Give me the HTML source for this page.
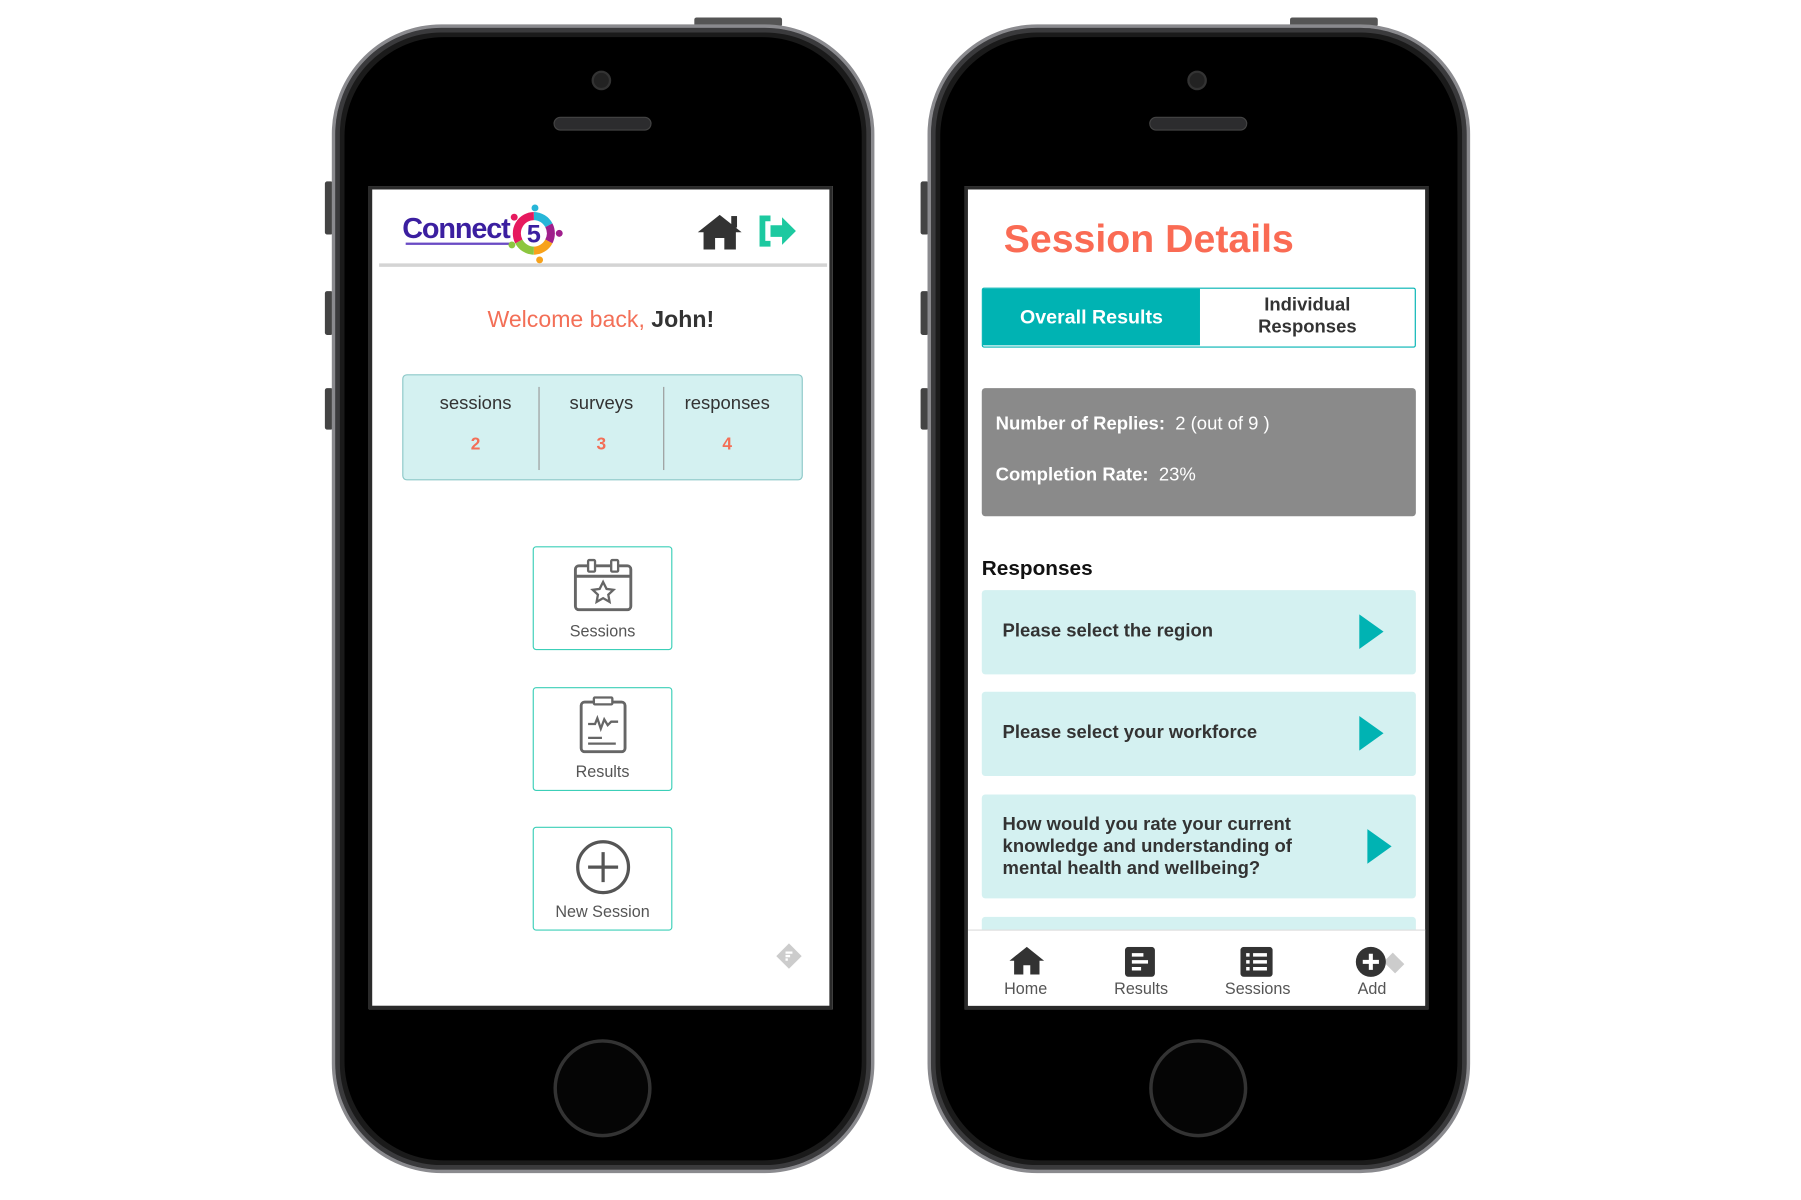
<!DOCTYPE html>
<html><head><meta charset="utf-8"><style>
*{margin:0;padding:0;box-sizing:border-box}
html,body{width:1801px;height:1200px;overflow:hidden;background:#fff;font-family:"Liberation Sans",sans-serif}
#s{position:absolute;left:-3px;top:-1px;width:1560px;height:1040px;transform:scale(1.15449);transform-origin:0 0}
.a{position:absolute}
.phone{position:absolute;top:22px;width:470px;height:995px;border-radius:95px;background:#1a1a1a;border:3px solid #8a8a8e;box-shadow:inset 0 0 0 4px #3a3a3c}
.phone .inner{position:absolute;left:8px;top:8px;right:8px;bottom:8px;border-radius:86px;background:#000}
.btn{position:absolute;background:#444;border-radius:2px}
.screen{position:absolute;top:162px;width:402px;height:713px;background:#fff;border:3px solid #2a2a2a;overflow:hidden}
.card{position:absolute;background:#d4f1f1;border-radius:3px}
.stat{position:absolute;top:0;width:115px;text-align:center}
.big{position:absolute;left:464px;width:121px;height:90px;border:1.5px solid #3ccfb8;border-radius:3px;background:#fff;text-align:center;color:#555;font-size:14px}
.big span{position:absolute;left:0;right:0;bottom:8px}
.q{position:absolute;left:18px;color:#333;font-size:16px;font-weight:bold}
.tri{position:absolute;width:0;height:0;border-top:15px solid transparent;border-bottom:15px solid transparent;border-left:21px solid #00b3b3}
.nav{position:absolute;top:684px;font-size:14px;color:#555;text-align:center;width:80px}
</style></head><body><div id="s">

<!-- left phone -->
<div class="btn" style="left:604px;top:16px;width:76px;height:8px;background:#555"></div>
<div class="btn" style="left:284px;top:158px;width:7px;height:46px"></div>
<div class="btn" style="left:284px;top:253px;width:7px;height:38px"></div>
<div class="btn" style="left:284px;top:337px;width:7px;height:36px"></div>
<div class="phone" style="left:290px"><div class="inner"></div></div>
<div class="a" style="left:515px;top:62px;width:17px;height:17px;border-radius:50%;background:#222;border:2px solid #333"></div>
<div class="a" style="left:482px;top:102px;width:85px;height:12px;border-radius:6px;background:#2c2c2e;border:1px solid #444"></div>
<div class="a" style="left:482px;top:901px;width:85px;height:85px;border-radius:50%;border:3px solid #333;background:#050505"></div>
<div class="screen" style="left:322px">
 <div class="a" style="left:26px;top:20px;font-size:25px;font-weight:bold;color:#3b1fa0;letter-spacing:-1px">Connect</div>
 <div class="a" style="left:29px;top:46px;width:90px;height:2px;background:#6a4bc4"></div>
 <svg class="a" style="left:112px;top:10px" width="56" height="56" viewBox="0 0 56 56">
  <circle cx="28" cy="28" r="15" fill="none" stroke="#e8e8f0" stroke-width="2"/>
  <path d="M28 13a15 15 0 0 1 13 8" stroke="#27b6d8" stroke-width="7" fill="none"/>
  <path d="M41 21a15 15 0 0 1 0 14" stroke="#a01f8c" stroke-width="7" fill="none"/>
  <path d="M41 35a15 15 0 0 1-13 8" stroke="#f7a21b" stroke-width="7" fill="none"/>
  <path d="M28 43a15 15 0 0 1-13-8" stroke="#8cc63f" stroke-width="7" fill="none"/>
  <path d="M15 35a15 15 0 0 1 13-22" stroke="#e6195e" stroke-width="7" fill="none"/>
  <circle cx="29" cy="6" r="3" fill="#27b6d8"/><circle cx="50" cy="28" r="3" fill="#a01f8c"/><circle cx="33" cy="51" r="3" fill="#f7a21b"/><circle cx="9" cy="38" r="3" fill="#8cc63f"/><circle cx="11" cy="14" r="3" fill="#e6195e"/>
  <text x="28" y="36" font-size="22" font-weight="bold" fill="#3b1fa0" text-anchor="middle" font-family="Liberation Sans">5</text>
 </svg>
 <svg class="a" style="left:280px;top:20px" width="44" height="34" viewBox="0 0 44 34"><path d="M2 17L21 2l19 15h-5v15h-10v-10h-8v10H7V17z" fill="#333"/><rect x="31" y="3" width="5" height="10" fill="#333"/></svg>
 <svg class="a" style="left:333px;top:22px" width="36" height="28" viewBox="0 0 36 28"><path d="M12 3H5v22h7" stroke="#1dc9a0" stroke-width="5" fill="none"/><path d="M12 9h10V2l12 12-12 12v-7H12z" fill="#1dc9a0"/></svg>
 <div class="a" style="left:6px;top:64px;width:388px;height:3px;background:#d4d4d4"></div>
 <div class="a" style="left:0;width:396px;top:102px;text-align:center;font-size:20px;color:#f36f57">Welcome back, <b style="color:#333">John!</b></div>
 <div class="a" style="left:26px;top:160px;width:347px;height:92px;background:#d4f1f1;border:1px solid #8cc8c8;border-radius:4px">
  <div class="a" style="left:117px;top:10px;width:1px;height:72px;background:#999"></div>
  <div class="a" style="left:225px;top:10px;width:1px;height:72px;background:#999"></div>
  <div class="stat" style="left:5px"><div style="margin-top:16px;font-size:16px;color:#333">sessions</div><div style="margin-top:17px;font-size:15px;font-weight:bold;color:#f36f57">2</div></div>
  <div class="stat" style="left:114px"><div style="margin-top:16px;font-size:16px;color:#333">surveys</div><div style="margin-top:17px;font-size:15px;font-weight:bold;color:#f36f57">3</div></div>
  <div class="stat" style="left:223px"><div style="margin-top:16px;font-size:16px;color:#333">responses</div><div style="margin-top:17px;font-size:15px;font-weight:bold;color:#f36f57">4</div></div>
 </div>
 <svg class="a" style="left:349px;top:652px" width="24" height="24" viewBox="0 0 24 24"><path d="M12 1l11 11-11 11L1 12z" fill="#ccc"/><path d="M9 9h6M9 12h4M9 15h2" stroke="#fff" stroke-width="2"/></svg>
</div>
<div class="big" style="top:474px"><svg style="margin-top:8px" width="52" height="48" viewBox="0 0 52 48"><rect x="2" y="8" width="48" height="38" rx="3" fill="none" stroke="#666" stroke-width="2.5"/><line x1="2" y1="17" x2="50" y2="17" stroke="#666" stroke-width="2.5"/><rect x="13" y="3" width="6" height="10" rx="1" fill="#fff" stroke="#666" stroke-width="2"/><rect x="33" y="3" width="6" height="10" rx="1" fill="#fff" stroke="#666" stroke-width="2"/><path d="M26 22l3 6 6 .8-4.5 4.2 1.1 6.2L26 36l-5.6 3.2 1.1-6.2L17 28.8l6-.8z" fill="none" stroke="#666" stroke-width="2"/></svg><span>Sessions</span></div>
<div class="big" style="top:596px"><svg style="margin-top:7px" width="44" height="50" viewBox="0 0 44 50"><rect x="3" y="5" width="38" height="43" rx="3" fill="none" stroke="#666" stroke-width="2.5"/><rect x="14" y="1" width="16" height="6" rx="1" fill="#fff" stroke="#666" stroke-width="2"/><path d="M9 24h6l2-5 3 9 3-8 3 5 3-3 6 0" fill="none" stroke="#666" stroke-width="2"/><path d="M9 36h12M9 41h24" stroke="#666" stroke-width="2"/></svg><span>Results</span></div>
<div class="big" style="top:717px"><svg style="margin-top:9px" width="50" height="50" viewBox="0 0 50 50"><circle cx="25" cy="25" r="22" fill="none" stroke="#555" stroke-width="2.8"/><path d="M25 12v26M12 25h26" stroke="#555" stroke-width="2.8"/></svg><span>New Session</span></div>

<!-- right phone -->
<div class="btn" style="left:1120px;top:16px;width:76px;height:8px;background:#555"></div>
<div class="btn" style="left:800px;top:158px;width:7px;height:46px"></div>
<div class="btn" style="left:800px;top:253px;width:7px;height:38px"></div>
<div class="btn" style="left:800px;top:337px;width:7px;height:36px"></div>
<div class="phone" style="left:806px"><div class="inner"></div></div>
<div class="a" style="left:1031px;top:62px;width:17px;height:17px;border-radius:50%;background:#222;border:2px solid #333"></div>
<div class="a" style="left:998px;top:102px;width:85px;height:12px;border-radius:6px;background:#2c2c2e;border:1px solid #444"></div>
<div class="a" style="left:998px;top:901px;width:85px;height:85px;border-radius:50%;border:3px solid #333;background:#050505"></div>
<div class="screen" style="left:838px">
 <div class="a" style="left:31px;top:24px;font-size:34px;font-weight:bold;color:#fa6b54">Session Details</div>
 <div class="a" style="left:12px;top:85px;width:376px;height:52px;border:1.5px solid #00b3b3;border-radius:2px;background:#fff">
  <div class="a" style="left:0;top:0;width:188px;height:49px;background:#00b3b3;color:#fff;font-weight:bold;font-size:17px;text-align:center;line-height:49px">Overall Results</div>
  <div class="a" style="left:188px;top:5px;width:186px;text-align:center;font-size:16px;color:#333;font-weight:bold;line-height:19px">Individual<br>Responses</div>
 </div>
 <div class="a" style="left:12px;top:172px;width:376px;height:111px;background:#8a8a8a;border-radius:3px;color:#fff;font-size:16px">
  <div class="a" style="left:12px;top:23px"><b>Number of Replies:</b>&nbsp; 2 (out of 9 )</div>
  <div class="a" style="left:12px;top:67px"><b>Completion Rate:</b>&nbsp; 23%</div>
 </div>
 <div class="a" style="left:12px;top:318px;font-size:18px;color:#111;font-weight:bold">Responses</div>
 <div class="card" style="left:12px;top:347px;width:376px;height:73px"><div class="q" style="top:27px">Please select the region</div><div class="tri" style="left:327px;top:21px"></div></div>
 <div class="card" style="left:12px;top:435px;width:376px;height:73px"><div class="q" style="top:27px">Please select your workforce</div><div class="tri" style="left:327px;top:21px"></div></div>
 <div class="card" style="left:12px;top:524px;width:376px;height:90px"><div class="q" style="top:17px;line-height:19px">How would you rate your current<br>knowledge and understanding of<br>mental health and wellbeing?</div><div class="tri" style="left:334px;top:30px"></div></div>
 <div class="card" style="left:12px;top:630px;width:376px;height:30px"></div>
 <div class="a" style="left:0;top:641px;width:400px;height:72px;background:#fff;border-top:1px solid #ddd"></div>
 <svg class="a" style="left:35px;top:655px" width="32" height="26" viewBox="0 0 32 26"><path d="M1 13L16 1l15 12h-4v12h-8v-8h-6v8H5V13z" fill="#333"/></svg>
 <svg class="a" style="left:136px;top:656px" width="26" height="26" viewBox="0 0 26 26"><rect x="0" y="0" width="26" height="26" rx="3" fill="#333"/><path d="M6 7h10M6 13h14M6 19h8" stroke="#fff" stroke-width="3"/></svg>
 <svg class="a" style="left:236px;top:656px" width="28" height="26" viewBox="0 0 28 26"><rect x="0" y="0" width="28" height="26" rx="3" fill="#333"/><path d="M5 7h3M11 7h12M5 13h3M11 13h12M5 19h3M11 19h12" stroke="#fff" stroke-width="3"/></svg>
 <svg class="a" style="left:334px;top:655px" width="46" height="30" viewBox="0 0 46 30"><path d="M26 14l8-8 10 10-8 8z" fill="#ccc"/><circle cx="15" cy="14" r="13" fill="#333"/><path d="M15 7v14M8 14h14" stroke="#fff" stroke-width="3.5"/></svg>
 <div class="nav" style="left:10px">Home</div>
 <div class="nav" style="left:110px">Results</div>
 <div class="nav" style="left:211px">Sessions</div>
 <div class="nav" style="left:310px">Add</div>
</div>
</div></body></html>
